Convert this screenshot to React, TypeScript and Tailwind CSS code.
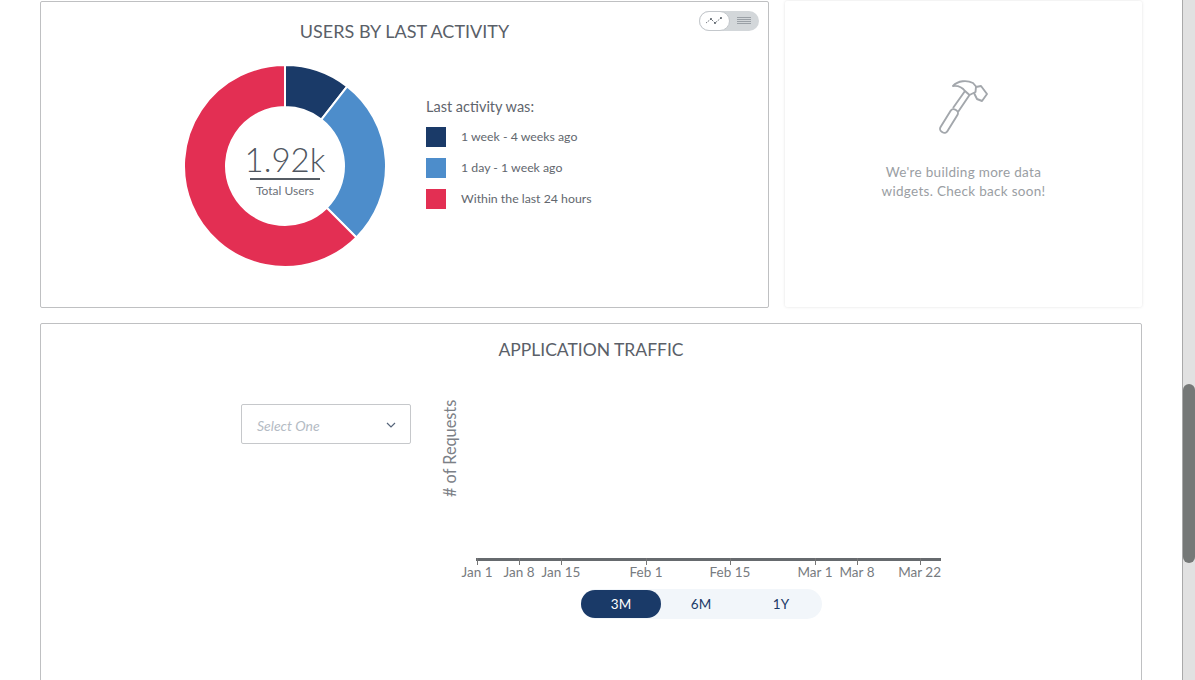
const donutSegments = [
  { color: '#1a3a68', from: 0, to: 38 },
  { color: '#4d8dcb', from: 38, to: 135 },
  { color: '#e32f53', from: 135, to: 360 },
];

const legendItems = [
  { color: 'bg-[#1a3a68]', label: '1 week - 4 weeks ago' },
  { color: 'bg-[#4d8dcb]', label: '1 day - 1 week ago' },
  { color: 'bg-[#e32f53]', label: 'Within the last 24 hours' },
];

const axisTicks = [
  { x: 37, label: 'Jan 1' },
  { x: 79, label: 'Jan 8' },
  { x: 121, label: 'Jan 15' },
  { x: 206, label: 'Feb 1' },
  { x: 290, label: 'Feb 15' },
  { x: 375, label: 'Mar 1' },
  { x: 417, label: 'Mar 8' },
  { x: 480, label: 'Mar 22' },
];

function polar(r: number, deg: number) {
  const rad = (deg * Math.PI) / 180;
  return `${(102 + r * Math.sin(rad)).toFixed(2)} ${(102 - r * Math.cos(rad)).toFixed(2)}`;
}

function segmentPath(from: number, to: number) {
  const large = to - from > 180 ? 1 : 0;
  return `M${polar(101, from)} A101 101 0 ${large} 1 ${polar(101, to)} L${polar(59, to)} A59 59 0 ${large} 0 ${polar(59, from)} Z`;
}

function Donut() {
  return (
    <div className="relative h-[204px] w-[204px] shrink-0">
      <svg width="204" height="204" viewBox="0 0 204 204">
        {donutSegments.map((s) => (
          <path key={s.color} d={segmentPath(s.from, s.to)} fill={s.color} stroke="#fff" strokeWidth="2" />
        ))}
      </svg>
      <div className="absolute left-[67px] top-[73px] flex w-[70px] flex-col items-center">
        <div className="flex h-[43px] w-full items-end justify-center border-b-2 border-[#555c64] text-[33px] leading-[38px] font-light whitespace-nowrap text-[#4f5660]">
          <span className="shrink-0">1.92k</span>
        </div>
        <div className="mt-[4px] text-[12px] leading-[14px] whitespace-nowrap text-[#6b7078]">Total Users</div>
      </div>
    </div>
  );
}

function ViewToggle() {
  return (
    <div className="absolute top-[9px] right-[9px] flex h-[20px] w-[60px] items-center rounded-full bg-[#d3d7da]">
      <div className="flex h-[20px] w-[31px] items-center justify-center rounded-full border border-[#c4c8cc] bg-white">
        <svg width="20" height="10" viewBox="0 0 20 10" fill="none" stroke="#555c64" strokeWidth="0.8" strokeDasharray="1.6 1">
          <path d="M1 7 L6 3 L10 7 L16 2" />
          <circle cx="6" cy="3" r="1" fill="#555c64" stroke="none" />
          <circle cx="10" cy="7" r="1" fill="#555c64" stroke="none" />
          <circle cx="16" cy="2" r="1" fill="#555c64" stroke="none" />
        </svg>
      </div>
      <svg className="ml-[6px]" width="16" height="10" viewBox="0 0 16 10" stroke="#9aa0a6" strokeWidth="1">
        <path d="M1 1.5H15M1 3.5H15M1 5.5H15M1 7.5H15" />
      </svg>
    </div>
  );
}

function HammerIcon() {
  return (
    <svg className="ml-[4px]" width="90" height="70" viewBox="0 0 90 70" fill="none" stroke="#a3a7ac" strokeWidth="1.9" strokeLinejoin="round">
      <rect x="24" y="38" width="8" height="26" rx="3.5" transform="rotate(32 28 51)" />
      <path d="M32 38 L44 21 M37 42 L48.5 25" />
      <path d="M32 16 C37 10.5 46 10 52 13 L55 16.5 L54.5 22 L48.5 25 L44 21 C41 17 36 15.5 32 16 Z" />
      <path d="M55 17 L60 16 L66 24 L61 31 L56 29 L53 23" />
    </svg>
  );
}

function TrafficChart() {
  return (
    <svg className="mt-[-9px] ml-[29px] shrink-0" width="505" height="190" viewBox="0 0 505 190">
      <text
        transform="translate(16 102) rotate(-90)"
        fontSize="16.3"
        fill="#7c8086"
        fontFamily="Lato, sans-serif"
      >
        # of Requests
      </text>
      <rect x="36" y="163" width="465" height="3" fill="#666a6e" />
      {axisTicks.map((t) => (
        <path key={t.label} d={`M${t.x}.5 163V170`} stroke="#777" strokeWidth="1" />
      ))}
      {axisTicks.map((t, i) => (
        <text
          key={t.label}
          x={i === axisTicks.length - 1 ? 501 : t.x}
          y="182"
          fontSize="13.5"
          fill="#777b80"
          textAnchor={i === axisTicks.length - 1 ? 'end' : 'middle'}
          fontFamily="Lato, sans-serif"
        >
          {t.label}
        </text>
      ))}
    </svg>
  );
}

export default function App() {
  return (
    <div className="flex h-[680px] overflow-hidden bg-white font-['Lato',sans-serif]">
      <main className="min-w-0 flex-1 px-[40px] pt-[1px]">
        <div className="flex gap-[16px]">
          {/* Users by last activity */}
          <section className="relative h-[307px] w-[729px] rounded-[2px] border border-[#bfc0c2] bg-white">
            <h2 className="pt-[17px] text-center text-[18px] leading-[24px] font-normal text-[#5a6068]">
              USERS BY LAST ACTIVITY
            </h2>
            <ViewToggle />
            <div className="mt-[21px] flex pl-[142px]">
              <Donut />
              <div className="ml-[39px] pt-[33px]">
                <div className="text-[14.5px] leading-[20px] text-[#5f656d]">Last activity was:</div>
                <ul className="mt-[10px] flex flex-col gap-[11px]">
                  {legendItems.map((item) => (
                    <li key={item.label} className="flex items-center gap-[15px]">
                      <span className={`h-[20px] w-[20px] ${item.color}`} />
                      <span className="text-[12.3px] leading-[20px] text-[#62676e]">{item.label}</span>
                    </li>
                  ))}
                </ul>
              </div>
            </div>
          </section>

          {/* Placeholder card */}
          <section className="flex h-[306px] w-[357px] flex-col items-center rounded-[2px] bg-white pt-[69px] shadow-[0_0_3px_rgba(0,0,0,0.12)]">
            <HammerIcon />
            <p className="mt-[23px] text-center text-[13.5px] leading-[19px] tracking-[0.3px] text-[#9a9ea3]">
              We're building more data
              <br />
              widgets. Check back soon!
            </p>
          </section>
        </div>

        {/* Application traffic */}
        <section className="mt-[15px] h-[400px] rounded-[2px] border border-[#bfc0c2] bg-white">
          <h2 className="pt-[14px] text-center text-[17.5px] leading-[24px] font-normal text-[#5a6068]">
            APPLICATION TRAFFIC
          </h2>
          <div className="mt-[42px] flex pl-[200px]">
            <div className="flex h-[40px] w-[170px] shrink-0 items-center justify-between rounded-[2px] border border-[#c6c8cb] pr-[14px] pl-[15px]">
              <span className="pt-[2px] text-[14px] text-[#b4bbc4] italic">Select One</span>
              <svg className="mt-[2px]" width="10" height="6" viewBox="0 0 10 6" fill="none" stroke="#56657a" strokeWidth="1.2">
                <path d="M1 1 L5 5 L9 1" />
              </svg>
            </div>
            <TrafficChart />
          </div>
          <div className="mt-[4px] ml-[540px] flex h-[30px] w-[241px] items-center rounded-full bg-[#f2f6fa] text-[13.5px] text-[#1a3a68]">
            <span className="flex h-[28px] w-[80px] items-center justify-center rounded-full bg-[#1a3a68] text-white">3M</span>
            <span className="flex w-[80px] justify-center">6M</span>
            <span className="flex w-[80px] justify-center">1Y</span>
          </div>
        </section>
      </main>

      {/* Page scrollbar */}
      <div className="h-full w-[13px] shrink-0 border-l border-[#a9a9a9] bg-[#e1e1e1]">
        <div className="mt-[384px] h-[179px] rounded-full bg-[#757877]" />
      </div>
    </div>
  );
}
